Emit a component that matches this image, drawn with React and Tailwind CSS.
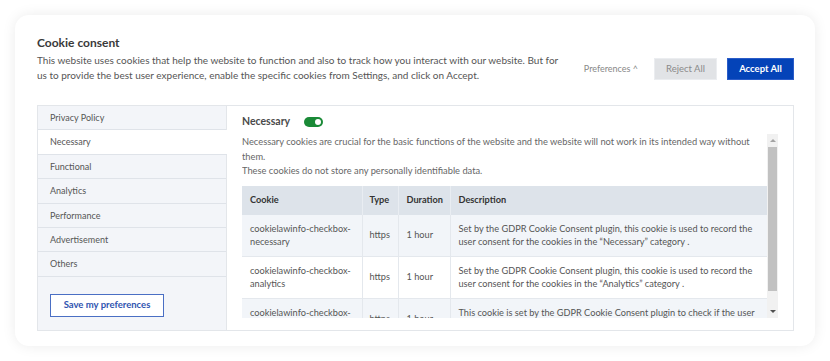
const font = { fontFamily: "Lato, 'Liberation Sans', sans-serif" };

const tabs = [
  "Privacy Policy",
  "Necessary",
  "Functional",
  "Analytics",
  "Performance",
  "Advertisement",
  "Others",
];

const rows = [
  {
    name: ["cookielawinfo-checkbox-", "necessary"],
    type: "https",
    duration: "1 hour",
    desc: [
      "Set by the GDPR Cookie Consent plugin, this cookie is used to record the",
      "user consent for the cookies in the \u201cNecessary\u201d category .",
    ],
  },
  {
    name: ["cookielawinfo-checkbox-", "analytics"],
    type: "https",
    duration: "1 hour",
    desc: [
      "Set by the GDPR Cookie Consent plugin, this cookie is used to record the",
      "user consent for the cookies in the \u201cAnalytics\u201d category .",
    ],
  },
  {
    name: ["cookielawinfo-checkbox-", "functional"],
    type: "https",
    duration: "1 hour",
    desc: [
      "This cookie is set by the GDPR Cookie Consent plugin to check if the user",
      "has given consent to the use of cookies.",
    ],
  },
];

function Scrollbar() {
  return (
    <div className="w-[11px] shrink-0 bg-[#f1f1f1] flex flex-col items-center">
      <div className="h-[13px] flex items-center justify-center">
        <div className="w-0 h-0 border-x-[3px] border-x-transparent border-b-[3px] border-b-[#a3a3a3]" />
      </div>
      <div className="w-[9px] h-[144px] bg-[#c1c1c1]" />
      <div className="flex-1" />
      <div className="h-[13px] flex items-center justify-center">
        <div className="w-0 h-0 border-x-[3px] border-x-transparent border-t-[3px] border-t-[#505050]" />
      </div>
    </div>
  );
}

export default function App() {
  return (
    <div className="w-[830px] h-[361px] bg-white p-[15px]" style={font}>
      <div className="h-[331px] bg-white rounded-[14px] shadow-[0_0_14px_rgba(0,0,0,0.08)] pt-[20px] pl-[22px] pr-[21px] pb-[15px] flex flex-col">
        <div className="flex items-start">
          <div className="w-[522px]">
            <div className="text-[12px] font-bold text-[#3a3a3a] leading-[16px]">
              Cookie consent
            </div>
            <p className="text-[10px] text-[#555] leading-[14.5px] mt-[2px]">
              This website uses cookies that help the website to function and also to track how you interact with our website. But for us to provide the best user experience, enable the specific cookies from Settings, and click on Accept.
            </p>
          </div>
          <div className="ml-auto flex items-center mt-[23px]">
            <span className="text-[9px] text-[#888] mr-[16px]">Preferences ^</span>
            <div className="w-[63px] h-[22px] bg-[#e1e3e6] border border-[#ebedf0] text-[#8a8a8a] text-[9.5px] flex items-center justify-center">
              Reject All
            </div>
            <div className="w-[67px] h-[22px] ml-[10px] bg-[#0443b8] border border-[#2a5cc8] text-white font-bold text-[9.5px] flex items-center justify-center">
              Accept All
            </div>
          </div>
        </div>

        <div className="mt-[23px] h-[226px] border border-[#e3e6ea] flex">
          <div className="w-[189px] shrink-0 bg-[#f3f5f9] border-r border-[#e3e6ea] flex flex-col">
            {tabs.map((t) => (
              <div
                key={t}
                className={`h-[24.4px] shrink-0 border-b border-[#dfe3e9] pl-[12px] flex items-center text-[9px] text-[#555] ${
                  t === "Necessary" ? "bg-white -mr-px" : ""
                }`}
              >
                {t}
              </div>
            ))}
            <div className="pl-[12px] pt-[17px]">
              <div className="w-[114px] h-[23px] bg-white border border-[#4a6fc4] text-[#2f54b0] font-bold text-[9.5px] flex items-center justify-center">
                Save my preferences
              </div>
            </div>
          </div>

          <div className="flex-1 min-w-0 pl-[15px] pr-[15px] pt-[9px] flex flex-col">
            <div className="flex items-center h-[14px]">
              <span className="text-[10.5px] font-bold text-[#4a4a4a]">Necessary</span>
              <div className="ml-[14px] w-[19px] h-[10px] rounded-full bg-[#1a8a37] flex items-center justify-end pr-[2px]">
                <div className="w-[6px] h-[6px] rounded-full bg-white" />
              </div>
            </div>

            <div className="mt-[5px] h-[184px] flex overflow-hidden">
              <div className="flex-1 min-w-0 overflow-hidden">
                <p className="text-[9.3px] text-[#666] leading-[14.5px] mt-[1px]">
                  Necessary cookies are crucial for the basic functions of the website and the website will not work in its intended way without them.
                </p>
                <p className="text-[9.3px] text-[#666] leading-[14.5px]">
                  These cookies do not store any personally identifiable data.
                </p>
                <table className="mt-[7px] w-[525px] border-collapse text-[9.2px] table-fixed">
                  <colgroup>
                    <col className="w-[120px]" />
                    <col className="w-[36px]" />
                    <col className="w-[52px]" />
                    <col />
                  </colgroup>
                  <thead>
                    <tr className="bg-[#dde3ea] h-[29px] text-[#333] font-bold">
                      <th className="text-left pl-[8px] border-r border-[#e9edf2]">Cookie</th>
                      <th className="text-left pl-[7px] border-r border-[#e9edf2]">Type</th>
                      <th className="text-left pl-[8px] border-r border-[#e9edf2]">Duration</th>
                      <th className="text-left pl-[8px]">Description</th>
                    </tr>
                  </thead>
                  <tbody className="text-[#555] leading-[13.5px]">
                    {rows.map((r, i) => (
                      <tr
                        key={i}
                        className={`border-b border-[#e4e8ed] ${i % 2 === 0 ? "bg-[#f2f5f9]" : "bg-white"}`}
                      >
                        <td className="pl-[8px] py-[7px] border-r border-[#e4e8ed] whitespace-nowrap">
                          {r.name[0]}
                          <br />
                          {r.name[1]}
                        </td>
                        <td className="pl-[7px] border-r border-[#e4e8ed]">{r.type}</td>
                        <td className="pl-[8px] border-r border-[#e4e8ed] whitespace-nowrap">{r.duration}</td>
                        <td className="pl-[8px] py-[7px] whitespace-nowrap">
                          {r.desc[0]}
                          <br />
                          {r.desc[1]}
                        </td>
                      </tr>
                    ))}
                  </tbody>
                </table>
              </div>
              <Scrollbar />
            </div>
          </div>
        </div>
      </div>
    </div>
  );
}
